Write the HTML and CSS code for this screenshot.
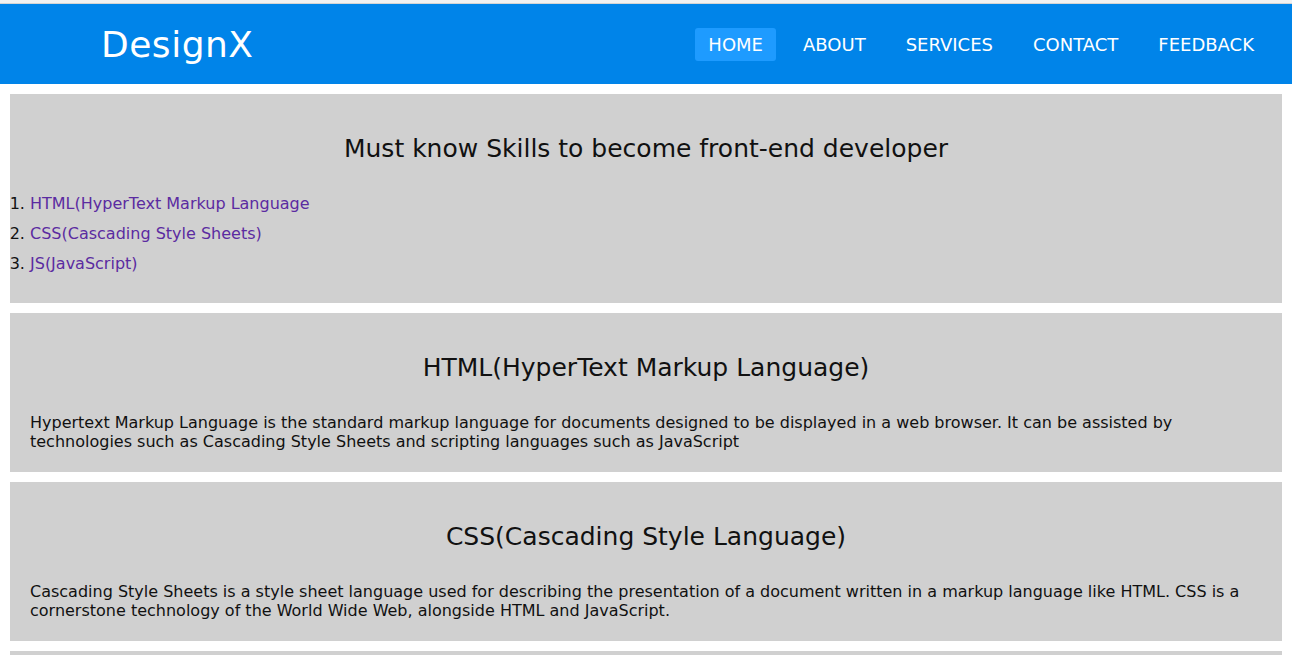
FILE: index.html
```html
<!DOCTYPE html>
<html lang="en">
<head>
<meta charset="utf-8">
<title>DesignX</title>
<link rel="stylesheet" href="styles.css">
</head>
<body>
<div class="topstrip"></div>
<header class="navbar">
  <div class="logo">DesignX</div>
  <nav class="nav">
    <a class="nav-link active" href="#">HOME</a>
    <a class="nav-link" href="#">ABOUT</a>
    <a class="nav-link" href="#">SERVICES</a>
    <a class="nav-link" href="#">CONTACT</a>
    <a class="nav-link" href="#">FEEDBACK</a>
  </nav>
</header>
<main class="content">
  <section class="card card-skills">
    <h2 class="card-title">Must know Skills to become front-end developer</h2>
    <ol class="skills">
      <li><a href="#html">HTML(HyperText Markup Language</a></li>
      <li><a href="#css">CSS(Cascading Style Sheets)</a></li>
      <li><a href="#js">JS(JavaScript)</a></li>
    </ol>
  </section>
  <section class="card" id="html">
    <h2 class="card-title">HTML(HyperText Markup Language)</h2>
    <p class="card-text">Hypertext Markup Language is the standard markup language for documents designed to be displayed in a web browser. It can be assisted by technologies such as Cascading Style Sheets and scripting languages such as JavaScript</p>
  </section>
  <section class="card" id="css">
    <h2 class="card-title">CSS(Cascading Style Language)</h2>
    <p class="card-text">Cascading Style Sheets is a style sheet language used for describing the presentation of a document written in a markup language like HTML. CSS is a cornerstone technology of the World Wide Web, alongside HTML and JavaScript.</p>
  </section>
  <section class="card" id="js">
    <h2 class="card-title">JS(JavaScript)</h2>
    <p class="card-text">JavaScript is a programming language that is one of the core technologies of the World Wide Web, alongside HTML and CSS.</p>
  </section>
</main>
</body>
</html>
```
FILE: styles.css
```css
* { box-sizing: border-box; }
html, body { margin: 0; padding: 0; }
body {
  font-family: "DejaVu Sans", sans-serif;
  background: #ffffff;
  color: #111111;
}
.topstrip {
  height: 4px;
  background: #f1f1f1;
  border-bottom: 1px solid #d4d4d4;
}
.navbar {
  height: 80px;
  background: #0084e9;
  display: flex;
  align-items: center;
  justify-content: space-between;
  padding: 0 25px 0 101px;
}
.logo {
  color: #ffffff;
  font-size: 36px;
  letter-spacing: 0.5px;
}
.nav {
  display: flex;
  gap: 14px;
  align-items: center;
}
.nav-link {
  color: #ffffff;
  text-decoration: none;
  font-size: 18px;
  padding: 7px 13px;
  line-height: 19px;
  border-radius: 3px;
}
.nav-link.active { background: #1e9bff; }
.content {
  display: flex;
  flex-direction: column;
  gap: 10px;
  padding: 10px 10px 0;
}
.card {
  background: #d0d0d0;
  padding: 40px 20px 21px;
}
.card-title {
  margin: 0;
  text-align: center;
  font-weight: normal;
  font-size: 25px;
  line-height: 30px;
}
.card-text {
  margin: 30px 0 0;
  font-size: 16px;
  line-height: 19px;
}
.skills {
  margin: 25px 0 0 -20px;
  padding-left: 20px;
  font-size: 16px;
}
.skills li { line-height: 30px; }
.skills a { color: #5b2ba1; text-decoration: none; }
.card-skills { padding-bottom: 24px; }
```
